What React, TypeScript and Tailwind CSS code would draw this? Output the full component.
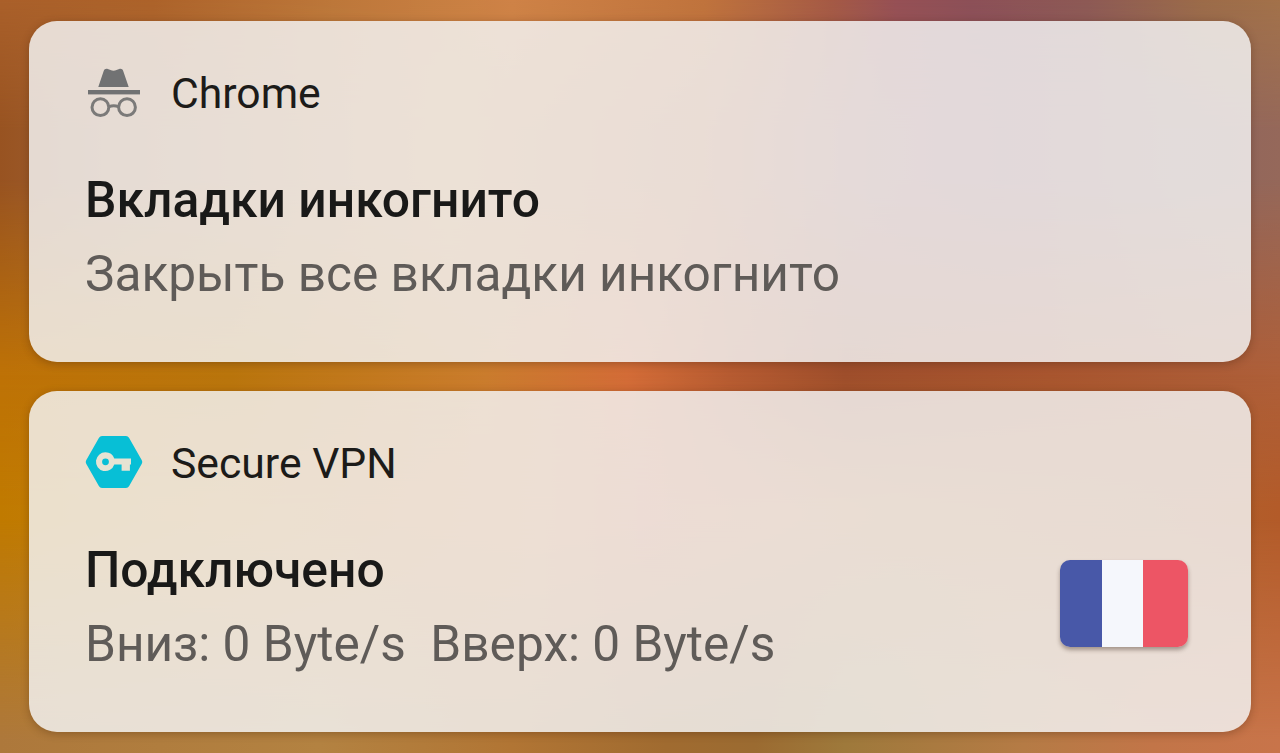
import type { ReactNode } from 'react';

const IncognitoIcon = () => (
  <svg width="58" height="58" viewBox="0 0 58 58" fill="none">
    <path
      d="M13.3 24 18.6 8.2C19.4 6 21 5.4 22.8 6L25.5 7.1C27.5 7.9 29.5 7.9 31.5 7.1L34.2 6C36 5.4 37.6 6 38.3 8.2L43.7 24Z"
      fill="#717273"
    />
    <rect x="3" y="27" width="52" height="4.4" fill="#717273" />
    <circle cx="15.4" cy="44.2" r="8.4" stroke="#7b7a79" strokeWidth="3" />
    <circle cx="42" cy="44.2" r="8.4" stroke="#7b7a79" strokeWidth="3" />
    <path d="M24 43.7Q28.7 41.7 33.4 43.7" stroke="#7b7a79" strokeWidth="3" />
  </svg>
);

const VpnIcon = () => (
  <svg width="58" height="58" viewBox="0 0 58 58">
    <path
      d="M17 3H41Q43 3 44 4.8L56.8 27.2Q57.8 29 56.8 30.8L44 53.2Q43 55 41 55H17Q15 55 14 53.2L1.2 30.8Q.2 29 1.2 27.2L14 4.8Q15 3 17 3Z"
      fill="#07bfd6"
    />
    <path
      d="M20.5 19.3A9.4 9.4 0 0 1 29.3 25.4H46V31.6H44.9V37.8H36.6V31.6H29.3A9.4 9.4 0 1 1 20.5 19.3ZM20.5 25.4A3.4 3.4 0 1 0 20.5 32.2 3.4 3.4 0 0 0 20.5 25.4Z"
      fill="#e6e3d3"
      fillRule="evenodd"
    />
  </svg>
);

const FranceFlag = () => (
  <div className="flex h-[87px] w-32 overflow-hidden rounded-[10px] shadow-[0_3px_4px_rgba(60,40,30,0.4)]">
    <div className="w-[42px] bg-[#4858a8]" />
    <div className="w-[41px] bg-[#f5f7fc]" />
    <div className="flex-1 bg-[#ed5565]" />
  </div>
);

// Each layer is one band of the wallpaper, faded into the band above it
const Wallpaper = () => (
  <div className="absolute inset-0">
    <div className="absolute inset-0 bg-[linear-gradient(90deg,#aa602a_0%,#ad632a_12%,#bd783a_26%,#cf8347_40%,#c0743d_55%,#a55a45_65%,#965055_70%,#8c5058_76%,#8d5a55_85%,#9c6c49_94%,#a3724a_100%)]" />
    <div className="absolute inset-0 bg-[linear-gradient(90deg,#985321_0%,#9f6234_8%,#c88342_35%,#b8683c_55%,#985855_68%,#8c5058_78%,#8f645c_92%,#95685a_100%)] [mask-image:linear-gradient(180deg,transparent_0px,black_130px)]" />
    <div className="absolute inset-0 bg-[linear-gradient(90deg,#be7206_0%,#b9750c_18%,#ca7c2d_38%,#d36c37_49%,#b65b31_57%,#9e4e2b_66%,#a8552e_82%,#ae5f39_100%)] [mask-image:linear-gradient(180deg,transparent_180px,black_375px)]" />
    <div className="absolute inset-0 bg-[linear-gradient(90deg,#c07a00_0%,#c27d0a_8%,#cf7632_42%,#cc6738_50%,#b46b2e_70%,#b0632c_90%,#b35b29_100%)] [mask-image:linear-gradient(180deg,transparent_375px,black_510px)]" />
    <div className="absolute inset-0 bg-[linear-gradient(90deg,#ad783b_0%,#b38241_25%,#b17534_40%,#a06b30_52%,#9b6b31_59%,#9e793b_66%,#b57b45_80%,#c27548_90%,#c8744a_100%)] [mask-image:linear-gradient(180deg,transparent_520px,black_740px)]" />
  </div>
);

type NotificationProps = {
  icon: ReactNode;
  app: string;
  title: string;
  text: string;
  image?: ReactNode;
};

const Notification = ({ icon, app, title, text, image }: NotificationProps) => (
  <section className="relative h-[341px] rounded-[28px] bg-[#f3f3f3]/84 shadow-[0_2px_8px_rgba(60,30,10,0.3)]">
    <div className="flex h-full flex-col px-14 pt-[42px]">
      <header className="flex h-[58px] items-center gap-7">
        {icon}
        <span className="pt-0.5 text-[42.7px] leading-[58px] text-[#1c1b19]">{app}</span>
      </header>
      <div className="mt-[42px] flex justify-between pr-2">
        <div>
          <h2 className="text-[49.8px] leading-[74px] font-medium text-[#191918]">{title}</h2>
          <p className="text-[49.6px] leading-[74px] whitespace-pre text-[#5f5b58]">{text}</p>
        </div>
        <div className="-mr-px pt-[27px]">{image}</div>
      </div>
    </div>
  </section>
);

export default function App() {
  return (
    <main className="relative h-[753px] w-[1280px] overflow-hidden font-['Roboto',sans-serif]">
      <Wallpaper />
      <div className="flex flex-col gap-[29px] pt-[21px] pr-[29px] pl-[29px]">
        <Notification
          icon={<IncognitoIcon />}
          app="Chrome"
          title="Вкладки инкогнито"
          text="Закрыть все вкладки инкогнито"
        />
        <Notification
          icon={<VpnIcon />}
          app="Secure VPN"
          title="Подключено"
          text="Вниз: 0 Byte/s  Вверх: 0 Byte/s"
          image={<FranceFlag />}
        />
      </div>
    </main>
  );
}
